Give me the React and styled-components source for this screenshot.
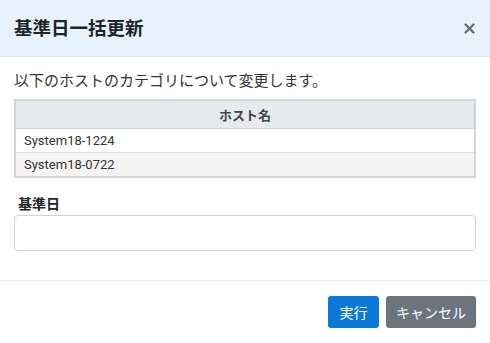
import React from 'react';
import styled, { createGlobalStyle } from 'styled-components';

const GlobalStyle = createGlobalStyle`
  html, body {
    margin: 0;
    padding: 0;
    background: #fff;
  }
  body {
    font-family: Roboto, "Noto Sans CJK JP", sans-serif;
    color: #212529;
  }
`;

const Modal = styled.div`
  width: 490px;
  height: 343px;
  display: flex;
  flex-direction: column;
  background: #fff;
`;

const Header = styled.div`
  height: 56px;
  display: flex;
  align-items: center;
  justify-content: space-between;
  padding: 0 14px;
  background: #e8f2fd;
  border-bottom: 1px solid #dee2e6;
`;

const Title = styled.h5`
  margin: 0 0 2px;
  font-size: 18.5px;
  font-weight: 700;
  color: #212529;
  font-family: "Noto Sans CJK JP", sans-serif;
`;

const Close = styled.button`
  border: none;
  background: none;
  padding: 0;
  width: 14px;
  height: 14px;
  display: flex;
  align-items: center;
  justify-content: center;
  cursor: pointer;
`;

const Body = styled.div`
  padding: 12px 14px 29px;
  border-bottom: 1px solid #e9ecef;
`;

const Lead = styled.p`
  margin: 0 0 8px;
  font-size: 15px;
  line-height: 22px;
  color: #333;
  font-family: "Noto Sans CJK JP", sans-serif;
`;

const Table = styled.table`
  width: 100%;
  border-collapse: collapse;
  border: 2px solid #d3d5d8;
  font-size: 13px;
`;

const Th = styled.th`
  height: 27px;
  padding: 0;
  background: #e7eaed;
  font-weight: 700;
  font-size: 13px;
  color: #444;
  text-align: center;
  font-family: "Noto Sans CJK JP", sans-serif;
  border-bottom: 1px solid #d3d5d8;
`;

const Td = styled.td`
  height: 23px;
  padding: 0 8px;
  color: #333;
  background: ${p => (p.$striped ? '#f4f4f4' : '#fff')};
  border-top: 1px solid #dcdee0;
`;

const Label = styled.label`
  display: block;
  margin: 15px 0 2px 4px;
  font-size: 14px;
  font-weight: 700;
  line-height: 20px;
  font-family: "Noto Sans CJK JP", sans-serif;
`;

const Input = styled.input`
  display: block;
  width: 100%;
  box-sizing: border-box;
  height: 36px;
  border: 1px solid #ced4da;
  border-radius: 4px;
  padding: 0 10px;
  font-size: 14px;
`;

const Footer = styled.div`
  display: flex;
  justify-content: flex-end;
  gap: 7px;
  padding: 15px 14px 0;
`;

const Button = styled.button`
  height: 32px;
  padding: 0 ${p => (p.$variant === 'primary' ? '11.5px' : '10px')};
  border: none;
  border-radius: 3px;
  color: #fff;
  font-size: 14px;
  font-family: "Noto Sans CJK JP", sans-serif;
  background: ${p => (p.$variant === 'primary' ? '#0a78d6' : '#6c757d')};
  cursor: pointer;
`;

export default function App() {
  return (
    <>
      <GlobalStyle />
      <Modal>
        <Header>
          <Title>基準日一括更新</Title>
          <Close aria-label="close">
            <svg width="11" height="11" viewBox="0 0 11 11">
              <path d="M1.5 1.5l8 8M9.5 1.5l-8 8" stroke="#6d6f72" strokeWidth="2.4" strokeLinecap="round" />
            </svg>
          </Close>
        </Header>
        <Body>
          <Lead>以下のホストのカテゴリについて変更します。</Lead>
          <Table>
            <thead>
              <tr>
                <Th>ホスト名</Th>
              </tr>
            </thead>
            <tbody>
              <tr>
                <Td>System18-1224</Td>
              </tr>
              <tr>
                <Td $striped>System18-0722</Td>
              </tr>
            </tbody>
          </Table>
          <Label>基準日</Label>
          <Input type="text" />
        </Body>
        <Footer>
          <Button $variant="primary">実行</Button>
          <Button>キャンセル</Button>
        </Footer>
      </Modal>
    </>
  );
}
